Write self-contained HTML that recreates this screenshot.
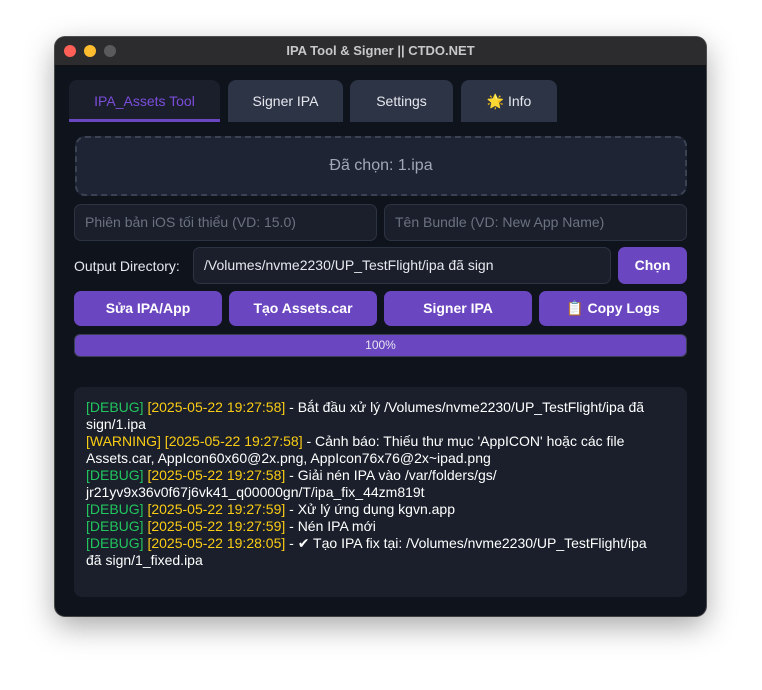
<!DOCTYPE html>
<html><head><meta charset="utf-8"><style>
*{box-sizing:border-box;margin:0;padding:0}
body{width:762px;height:690px;background:#fff;font-family:"Liberation Sans","DejaVu Sans",sans-serif;position:relative;overflow:hidden}
.win{position:absolute;left:55px;top:37px;width:651px;height:579px;background:#0f131c;border-radius:10px;box-shadow:0 10px 30px rgba(0,0,0,.35),0 0 0 1px #555;overflow:hidden}
.tb{height:29px;background:#2c2c2e;border-bottom:1px solid #111;text-align:center;color:#c8c8c8;font-size:13px;font-weight:bold;line-height:28px}
.dot{position:absolute;top:8px;width:12px;height:12px;border-radius:50%}
.a{position:absolute}
.tab{position:absolute;top:43px;height:42px;background:#2d3446;border-radius:8px 8px 0 0;color:#e6e8ee;font-size:14px;text-align:center;line-height:42px}
.inp{position:absolute;background:#1a1f2b;border:1px solid #2c3342;border-radius:7px;font-size:14px;color:#6b7280;padding-left:10px}
.btn{position:absolute;top:254px;height:35px;width:148px;background:#6b46c1;border-radius:7px;color:#fff;font-weight:bold;font-size:14px;text-align:center;line-height:35px}
.log{position:absolute;left:19px;top:350px;width:613px;height:210px;background:#1a1f2b;border-radius:8px;padding:12px 12px;color:#fff;font-size:14px;line-height:17px;white-space:nowrap}
.g{color:#22c55e}.y{color:#facc15}
</style></head><body>
<div class="win">
<div class="tb">IPA Tool &amp; Signer || CTDO.NET</div>
<div class="dot" style="left:9px;background:#fe5f57"></div>
<div class="dot" style="left:29px;background:#febc2e"></div>
<div class="dot" style="left:49px;background:#5a5a5c"></div>
<div class="tab" style="left:14px;width:151px;background:#1a1f2b;color:#7c4ddb;border-bottom:3px solid #6b46c1">IPA_Assets Tool</div>
<div class="tab" style="left:173px;width:115px">Signer IPA</div>
<div class="tab" style="left:295px;width:103px">Settings</div>
<div class="tab" style="left:406px;width:96px">🌟 Info</div>
<div class="a" style="left:20px;top:99px;width:612px;height:60px;background:#1e2433;border:2px dashed #3a4253;border-radius:10px;color:#a0a8b8;font-size:16px;text-align:center;line-height:56px">Đã chọn: 1.ipa</div>
<div class="inp" style="left:19px;top:167px;width:303px;height:37px;line-height:35px">Phiên bản iOS tối thiểu (VD: 15.0)</div>
<div class="inp" style="left:329px;top:167px;width:303px;height:37px;line-height:35px">Tên Bundle (VD: New App Name)</div>
<div class="a" style="left:19px;top:221px;color:#e6e8ee;font-size:14px">Output Directory:</div>
<div class="inp" style="left:138px;top:210px;width:418px;height:37px;line-height:35px;color:#e6e8ee">/Volumes/nvme2230/UP_TestFlight/ipa đã sign</div>
<div class="btn" style="left:563px;top:210px;width:69px;height:37px;line-height:37px">Chọn</div>
<div class="btn" style="left:19px">Sửa IPA/App</div>
<div class="btn" style="left:174px">Tạo Assets.car</div>
<div class="btn" style="left:329px">Signer IPA</div>
<div class="btn" style="left:484px">📋 Copy Logs</div>
<div class="a" style="left:19px;top:297px;width:613px;height:23px;background:#6b46c1;border:1px solid #3a3f55;border-radius:6px;color:#e6e6f0;font-size:12px;text-align:center;line-height:21px">100%</div>
<div class="log">
<span class="g">[DEBUG]</span> <span class="y">[2025-05-22 19:27:58]</span> - Bắt đầu xử lý /Volumes/nvme2230/UP_TestFlight/ipa đã<br>sign/1.ipa<br>
<span class="y">[WARNING] [2025-05-22 19:27:58]</span> - Cảnh báo: Thiếu thư mục 'AppICON' hoặc các file<br>Assets.car, AppIcon60x60@2x.png, AppIcon76x76@2x~ipad.png<br>
<span class="g">[DEBUG]</span> <span class="y">[2025-05-22 19:27:58]</span> - Giải nén IPA vào /var/folders/gs/<br>jr21yv9x36v0f67j6vk41_q00000gn/T/ipa_fix_44zm819t<br>
<span class="g">[DEBUG]</span> <span class="y">[2025-05-22 19:27:59]</span> - Xử lý ứng dụng kgvn.app<br>
<span class="g">[DEBUG]</span> <span class="y">[2025-05-22 19:27:59]</span> - Nén IPA mới<br>
<span class="g">[DEBUG]</span> <span class="y">[2025-05-22 19:28:05]</span> - ✔ Tạo IPA fix tại: /Volumes/nvme2230/UP_TestFlight/ipa<br>đã sign/1_fixed.ipa
</div>
</div>
</body></html>
